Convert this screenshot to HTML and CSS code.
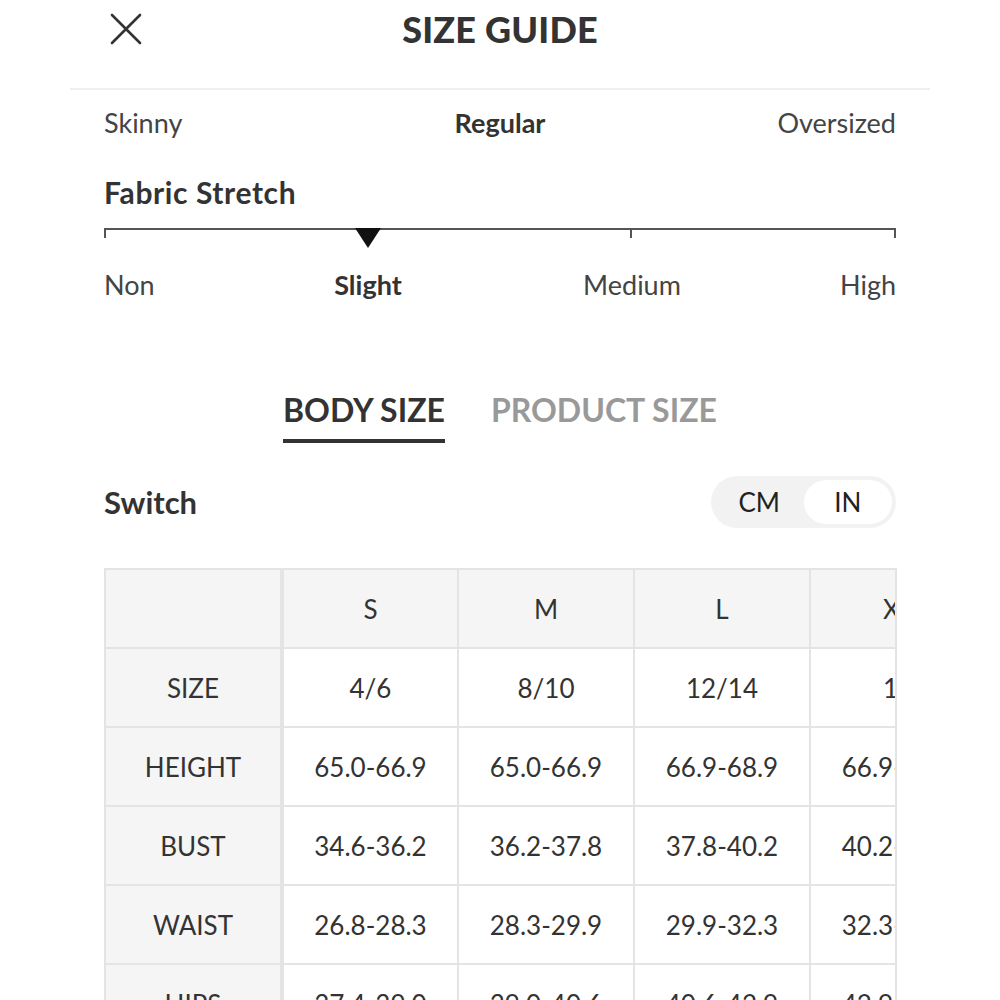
FILE: index.html
```html
<!DOCTYPE html>
<html lang="en">
<head>
<meta charset="utf-8">
<title>Size Guide</title>
<link rel="stylesheet" href="styles.css">
</head>
<body>
<div class="sheet">
  <header class="top">
    <button class="close" aria-label="Close">
      <svg width="32" height="32" viewBox="0 0 32 32"><path d="M2 2 L30 30 M30 2 L2 30" stroke="#333" stroke-width="2.6" fill="none" stroke-linecap="round"/></svg>
    </button>
    <h1 class="title">SIZE GUIDE</h1>
  </header>

  <div class="content">
    <div class="fit">
      <span class="fit-left">Skinny</span>
      <span class="fit-mid">Regular</span>
      <span class="fit-right">Oversized</span>
    </div>

    <h2 class="stretch-title">Fabric Stretch</h2>
    <div class="scale">
      <span class="seg seg-first"></span>
      <span class="seg seg-mid"></span>
      <span class="seg seg-last"></span>
    </div>
    <div class="scale-labels">
      <span class="lbl lbl-non">Non</span>
      <span class="lbl lbl-slight">Slight</span>
      <span class="lbl lbl-medium">Medium</span>
      <span class="lbl lbl-high">High</span>
    </div>

    <nav class="tabs">
      <span class="tab active">BODY SIZE</span>
      <span class="tab">PRODUCT SIZE</span>
    </nav>

    <div class="switch-row">
      <span class="switch-label">Switch</span>
      <div class="unit-toggle">
        <span class="unit">CM</span>
        <span class="unit on">IN</span>
      </div>
    </div>

    <div class="table-wrap">
      <table class="sizes">
        <colgroup>
          <col class="c-first"><col class="c"><col class="c"><col class="c"><col class="c">
        </colgroup>
        <thead>
          <tr><th class="corner"></th><th>S</th><th>M</th><th>L</th><th>XL</th></tr>
        </thead>
        <tbody>
          <tr><th>SIZE</th><td>4/6</td><td>8/10</td><td>12/14</td><td>16</td></tr>
          <tr><th>HEIGHT</th><td>65.0-66.9</td><td>65.0-66.9</td><td>66.9-68.9</td><td>66.9-68.9</td></tr>
          <tr><th>BUST</th><td>34.6-36.2</td><td>36.2-37.8</td><td>37.8-40.2</td><td>40.2-42.5</td></tr>
          <tr><th>WAIST</th><td>26.8-28.3</td><td>28.3-29.9</td><td>29.9-32.3</td><td>32.3-34.6</td></tr>
          <tr><th>HIPS</th><td>37.4-39.0</td><td>39.0-40.6</td><td>40.6-42.9</td><td>42.9-45.3</td></tr>
        </tbody>
      </table>
    </div>
  </div>
</div>
</body>
</html>
```

FILE: styles.css
```css
html, body {
  margin: 0;
  padding: 0;
  background: #ffffff;
}
body {
  font-family: Lato, "Noto Sans", "Liberation Sans", sans-serif;
  color: #333333;
  height: 1000px;
  overflow: hidden;
}
.sheet {
  width: 860px;
  margin: 0 auto;
}
.top {
  height: 88px;
  border-bottom: 2px solid #efefef;
  display: flex;
  align-items: center;
  justify-content: center;
  position: relative;
}
.close {
  position: absolute;
  left: 40px;
  top: 13px;
  width: 32px;
  height: 32px;
  padding: 0;
  border: 0;
  background: none;
}
.close svg { display: block; }
.title {
  margin: 0 0 30px;
  font-size: 36px;
  font-weight: 900;
  letter-spacing: 0.2px;
  color: #333;
}
.content {
  padding: 0 34px;
}
.fit {
  display: grid;
  grid-template-columns: 1fr 1fr 1fr;
  font-size: 27px;
  height: 34px;
  line-height: 34px;
  margin-top: 16px;
  color: #444;
}
.fit-mid { text-align: center; font-weight: 700; color: #333; }
.fit-right { text-align: right; }
.stretch-title {
  margin: 35px 0 0;
  font-size: 30px;
  font-weight: 700;
  letter-spacing: 0.6px;
  line-height: 34px;
  height: 34px;
  color: #333;
}
.scale {
  display: flex;
  margin-top: 19px;
  height: 10px;
  position: relative;
}
.seg {
  flex: 1;
  border-top: 2px solid #555;
}
.seg-first { border-left: 2px solid #555; }
.seg-last { border-left: 2px solid #555; border-right: 2px solid #555; }
.seg-mid { position: relative; }
.seg-mid::before {
  content: "";
  position: absolute;
  left: -13px;
  top: -2px;
  border-left: 13px solid transparent;
  border-right: 13px solid transparent;
  border-top: 20px solid #111;
}
.scale-labels {
  display: grid;
  grid-template-columns: repeat(6, 1fr);
  font-size: 27px;
  line-height: 34px;
  margin-top: 30px;
  color: #444;
}
.lbl-non { grid-column: 1; }
.lbl-slight { grid-column: 2 / span 2; text-align: center; font-weight: 700; color: #333; }
.lbl-medium { grid-column: 4 / span 2; text-align: center; }
.lbl-high { grid-column: 6; text-align: right; }

.tabs {
  display: flex;
  justify-content: center;
  gap: 46px;
  margin-top: 90px;
}
.tab {
  font-size: 32px;
  font-weight: 700;
  color: #999;
  line-height: 36px;
  padding-bottom: 11px;
  border-bottom: 4px solid transparent;
}
.tab.active {
  color: #333;
  border-bottom-color: #333;
}
.switch-row {
  display: flex;
  align-items: center;
  justify-content: space-between;
  margin-top: 33px;
}
.switch-label {
  font-size: 31px;
  font-weight: 700;
  color: #333;
}
.unit-toggle {
  display: flex;
  background: #f2f2f2;
  border-radius: 26px;
  padding: 4px;
  height: 44px;
  width: 177px;
}
.unit {
  flex: 1;
  display: flex;
  align-items: center;
  justify-content: center;
  font-size: 26px;
  color: #222;
  border-radius: 23px;
}
.unit.on {
  background: #fff;
}
.table-wrap {
  margin-top: 40px;
  width: 791px;
  border-right: 2px solid #e4e4e4;
  overflow: hidden;
}
.sizes {
  border-collapse: collapse;
  table-layout: fixed;
  width: 881px;
  font-size: 26px;
  color: #333;
}
.c-first { width: 177px; }
.c { width: 176px; }
.sizes th, .sizes td {
  height: 77px;
  border: 2px solid #e4e4e4;
  text-align: center;
  font-weight: 400;
  padding: 0;
  white-space: nowrap;
}
.sizes thead th { background: #f5f5f5; }
.sizes tbody th { background: #f5f5f5; }
.sizes th:first-child {
  border-right: 4px solid #e4e4e4;
}
.sizes td { background: #fff; }
```
